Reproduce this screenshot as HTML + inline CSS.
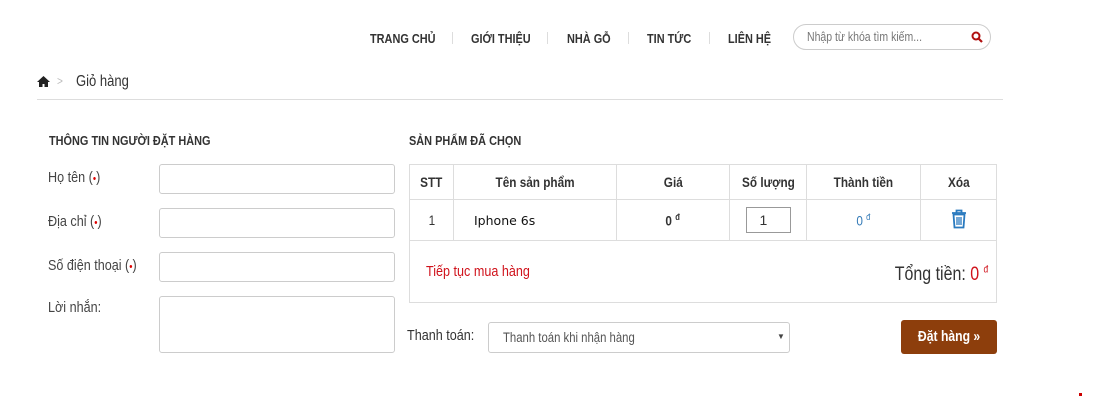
<!DOCTYPE html>
<html><head><meta charset="utf-8"><style>
*{margin:0;padding:0;box-sizing:border-box}
body{width:1103px;height:402px;background:#fff;position:relative;overflow:hidden;font-family:"Liberation Sans",sans-serif;color:#333}
.a{position:absolute;white-space:nowrap;transform:scaleX(.84);transform-origin:left center}
.b{position:absolute}
.nav{font-weight:bold;font-size:13px;color:#333;top:31px}
.sep{position:absolute;top:32px;width:1px;height:12px;background:#ddd}
.lbl{font-size:15px;color:#444;left:48px}
.req{color:#d00;font-size:11px}
.inp{position:absolute;left:159px;width:236px;height:30px;border:1px solid #ccc;border-radius:3px}
.h{font-weight:bold;font-size:13px;color:#333;top:133px}
table{position:absolute;left:409px;top:164px;border-collapse:collapse;width:588px}
td{border:1px solid #ddd;text-align:center;font-size:14px}
.c{display:inline-block;transform:scaleX(.84);white-space:nowrap}
</style></head><body>
<div class="a nav" style="left:370px">TRANG CHỦ</div>
<div class="sep" style="left:452px"></div>
<div class="a nav" style="left:471px">GIỚI THIỆU</div>
<div class="sep" style="left:547px"></div>
<div class="a nav" style="left:567px">NHÀ GỖ</div>
<div class="sep" style="left:628px"></div>
<div class="a nav" style="left:647px">TIN TỨC</div>
<div class="sep" style="left:709px"></div>
<div class="a nav" style="left:728px">LIÊN HỆ</div>
<div class="b" style="left:793px;top:24px;width:198px;height:26px;border:1px solid #ccc;border-radius:13px"></div>
<div class="a" style="left:807px;top:30px;font-size:12.5px;color:#777">Nhập từ khóa tìm kiếm...</div>
<svg class="b" style="left:971px;top:31px" width="12" height="12" viewBox="0 0 12 12"><circle cx="5" cy="5" r="3.5" fill="none" stroke="#b01010" stroke-width="2"/><path d="M7.5 7.5L11 11" stroke="#b01010" stroke-width="2.2"/></svg>
<svg class="b" style="left:37px;top:76px" width="13" height="11" viewBox="0 0 13 11"><path d="M6.5 0L0 6h2v5h3.5V8h2v3H11V6h2z" fill="#222"/></svg>
<div class="a" style="left:57px;top:74px;font-size:12px;color:#bbb">&gt;</div>
<div class="a" style="left:76px;top:73px;font-size:15.5px;color:#333">Giỏ hàng</div>
<div class="b" style="left:37px;top:99px;width:966px;height:1px;background:#ddd"></div>
<div class="a h" style="left:49px">THÔNG TIN NGƯỜI ĐẶT HÀNG</div>
<div class="a lbl" style="top:169px">Họ tên (<span class="req">•</span>)</div>
<div class="a lbl" style="top:213px">Địa chỉ (<span class="req">•</span>)</div>
<div class="a lbl" style="top:257px">Số điện thoại (<span class="req">•</span>)</div>
<div class="a lbl" style="top:299px">Lời nhắn:</div>
<div class="inp" style="top:164px"></div>
<div class="inp" style="top:208px"></div>
<div class="inp" style="top:252px"></div>
<div class="inp" style="top:296px;height:57px"></div>
<div class="a h" style="left:409px">SẢN PHẨM ĐÃ CHỌN</div>
<table>
<tr style="height:35px;font-weight:bold"><td style="width:44px;font-weight:bold"><span class="c">STT</span></td><td style="width:163px;font-weight:bold"><span class="c">Tên sản phẩm</span></td><td style="width:113px;font-weight:bold"><span class="c">Giá</span></td><td style="width:77px;font-weight:bold"><span class="c">Số lượng</span></td><td style="width:114px;font-weight:bold"><span class="c">Thành tiền</span></td><td style="font-weight:bold"><span class="c">Xóa</span></td></tr>
<tr style="height:41px"><td><span class="c">1</span></td><td style="text-align:left;padding-left:20px;font-family:'DejaVu Sans',sans-serif;font-size:12.5px;color:#111">Iphone 6s</td><td style="font-weight:bold"><span class="c">0 <sup style="font-size:9px">đ</sup></span></td><td><div style="margin:0 auto;width:45px;height:26px;border:1px solid #999;text-align:left;padding:4px 0 0 13px">1</div></td><td style="color:#337ab7"><span class="c">0 <sup style="font-size:9px">đ</sup></span></td><td><svg width="16" height="20" viewBox="0 0 16 20"><path d="M1 4h14M5.5 4V1.5h5V4" fill="none" stroke="#2a7abf" stroke-width="1.8"/><path d="M2.5 5.5h11l-1 13h-9z" fill="none" stroke="#2a7abf" stroke-width="1.8"/><path d="M6 8v8M8 8v8M10 8v8" stroke="#2a7abf" stroke-width="1.3"/></svg></td></tr>
<tr style="height:62px"><td colspan="6" style="position:relative;text-align:left"><span class="a" style="left:16px;top:22px;color:#d0121b;font-size:15px">Tiếp tục mua hàng</span><span class="a" style="right:8px;top:23px;font-size:19px;color:#333;transform-origin:right center">Tổng tiền: <span style="color:#d0121b">0 <sup style="font-size:10px">đ</sup></span></span></td></tr>
</table>
<div class="a" style="left:407px;top:327px;font-size:15px;color:#333">Thanh toán:</div>
<div class="b" style="left:488px;top:322px;width:302px;height:31px;border:1px solid #ccc;border-radius:3px"></div>
<div class="a" style="left:503px;top:330px;font-size:13.5px;color:#555">Thanh toán khi nhận hàng</div>
<div class="b" style="left:777px;top:332px;font-size:8px;color:#444">▼</div>
<div class="b" style="left:901px;top:320px;width:96px;height:34px;background:#8d3e0c;border-radius:3px;color:#fff;font-weight:bold;font-size:14.5px;text-align:center;line-height:34px"><span class="c">Đặt hàng »</span></div>
<div class="b" style="left:1079px;top:393px;width:3px;height:3px;background:#c00"></div>
</body></html>
